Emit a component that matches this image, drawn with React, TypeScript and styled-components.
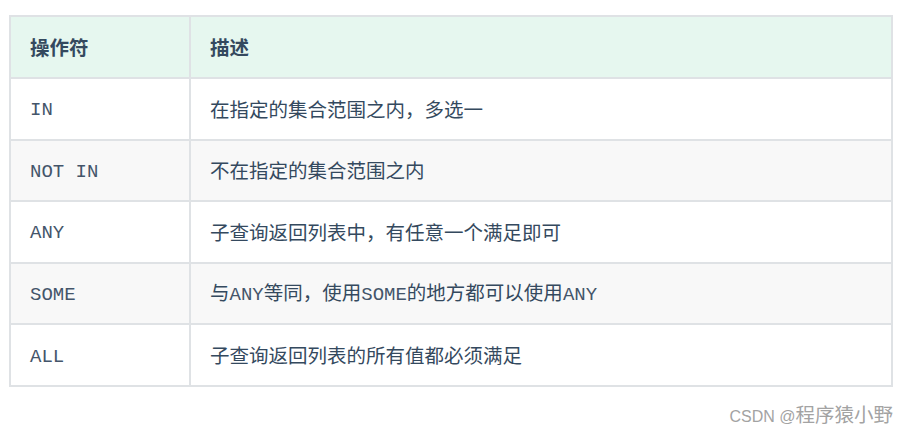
import React from "react";
import styled, { createGlobalStyle } from "styled-components";

const Global = createGlobalStyle`
  html, body { margin: 0; padding: 0; background: #ffffff; }
  body { font-family: "Noto Sans CJK SC", "Noto Sans", sans-serif; }
`;

const Page = styled.div`
  width: 910px;
  height: 433px;
  box-sizing: border-box;
  padding: 15px 17px 0 9px;
  display: flex;
  flex-direction: column;
`;

const Table = styled.table`
  width: 884px;
  border-collapse: collapse;
  border: 2px solid #dfe2e5;
  color: #34495e;
  font-size: 19.5px;
`;

const Row = styled.tr<{ $variant: "head" | "odd" | "even" }>`
  background: ${(p) =>
    p.$variant === "head" ? "#e6f7ef" : p.$variant === "even" ? "#f8f8f8" : "#ffffff"};
  height: ${(p) => (p.$variant === "head" ? "62px" : "61.6px")};
`;

const HeadCell = styled.th<{ $w?: number }>`
  border: 2px solid #dfe2e5;
  text-align: left;
  font-weight: 700;
  padding: 0 19px;
  line-height: 26px;
  width: ${(p) => (p.$w ? `${p.$w}px` : "auto")};
  box-sizing: border-box;
`;

const Cell = styled.td`
  border: 2px solid #dfe2e5;
  padding: 0 19px;
  line-height: 26px;
`;

const Code = styled.span`
  font-family: "Liberation Mono", "Courier New", monospace;
  font-size: 19px;
  color: #44556a;
`;

const Watermark = styled.div`
  align-self: flex-end;
  margin-top: 16px;
  font-family: "Liberation Sans", sans-serif;
  font-size: 16px;
  color: #a3a3a3;
  line-height: 22px;
  white-space: nowrap;
`;

const WatermarkName = styled.span`
  font-family: "Noto Sans CJK SC", sans-serif;
  font-size: 19.5px;
`;

const rows: { op: string; desc: React.ReactNode }[] = [
  { op: "IN", desc: "在指定的集合范围之内，多选一" },
  { op: "NOT IN", desc: "不在指定的集合范围之内" },
  { op: "ANY", desc: "子查询返回列表中，有任意一个满足即可" },
  {
    op: "SOME",
    desc: (
      <>
        与<Code>ANY</Code>等同，使用<Code>SOME</Code>的地方都可以使用<Code>ANY</Code>
      </>
    ),
  },
  { op: "ALL", desc: "子查询返回列表的所有值都必须满足" },
];

export default function App() {
  return (
    <>
      <Global />
      <Page>
        <Table>
          <thead>
            <Row $variant="head">
              <HeadCell $w={180}>操作符</HeadCell>
              <HeadCell>描述</HeadCell>
            </Row>
          </thead>
          <tbody>
            {rows.map((r, i) => (
              <Row key={r.op} $variant={i % 2 === 1 ? "even" : "odd"}>
                <Cell>
                  <Code>{r.op}</Code>
                </Cell>
                <Cell>{r.desc}</Cell>
              </Row>
            ))}
          </tbody>
        </Table>
        <Watermark>
          CSDN @<WatermarkName>程序猿小野</WatermarkName>
        </Watermark>
      </Page>
    </>
  );
}
